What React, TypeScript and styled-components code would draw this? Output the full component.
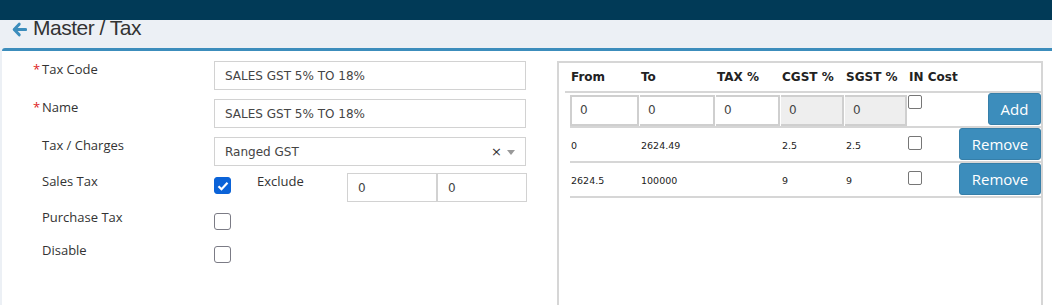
import React from 'react'
import styled, { createGlobalStyle } from 'styled-components'

const GlobalStyle = createGlobalStyle`
  body {
    margin: 0;
    background: #ecf0f5;
    font-family: "Open Sans", "Noto Sans", sans-serif;
    color: #333;
    overflow: hidden;
  }
`

const rows = [
  { from: '0', to: '2624.49', tax: '', cgst: '2.5', sgst: '2.5' },
  { from: '2624.5', to: '100000', tax: '', cgst: '9', sgst: '9' },
]

const App = () => {
  return (
    <>
      <GlobalStyle />
      <TopBar />
      <Heading>
        <BackIcon>
          <svg width="15" height="15" viewBox="0 0 15 15">
            <path d="M7.2 2.2 L2.2 7.5 L7.2 12.8" fill="none" stroke="currentColor" strokeWidth="3" strokeLinecap="round" strokeLinejoin="round" />
            <path d="M3 7.5 H13.5" fill="none" stroke="currentColor" strokeWidth="3.2" strokeLinecap="round" />
          </svg>
        </BackIcon>
        <Title>Master / Tax</Title>
      </Heading>
      <Box>
        <FormCol>
          <FormRow $gap={9}>
            <Label>
              <Star>*</Star>Tax Code
            </Label>
            <TextInput defaultValue="SALES GST 5% TO 18%" />
          </FormRow>
          <FormRow $gap={9}>
            <Label>
              <Star>*</Star>Name
            </Label>
            <TextInput defaultValue="SALES GST 5% TO 18%" />
          </FormRow>
          <FormRow $gap={7}>
            <Label>
              <Star />Tax / Charges
            </Label>
            <Select>
              <span>Ranged GST</span>
              <SelectTools>
                <Clear>×</Clear>
                <Caret />
              </SelectTools>
            </Select>
          </FormRow>
          <FormRow $gap={7}>
            <Label>
              <Star />Sales Tax
            </Label>
            <Check $checked>
              <svg width="12" height="10" viewBox="0 0 12 10">
                <path d="M1.5 5.2 L4.5 8.2 L10.5 1.8" fill="none" stroke="#fff" strokeWidth="2.2" />
              </svg>
            </Check>
            <ExcludeLabel>Exclude</ExcludeLabel>
            <SmallInput defaultValue="0" />
            <SmallInput defaultValue="0" />
          </FormRow>
          <FormRow $gap={12}>
            <Label>
              <Star />Purchase Tax
            </Label>
            <Check />
          </FormRow>
          <FormRow $gap={0}>
            <Label>
              <Star />Disable
            </Label>
            <Check />
          </FormRow>
        </FormCol>

        <Panel>
          <HeadRow>
            <HeadCell $first>From</HeadCell>
            <HeadCell>To</HeadCell>
            <HeadCell>TAX %</HeadCell>
            <HeadCell>CGST %</HeadCell>
            <HeadCell>SGST %</HeadCell>
            <HeadCell>IN Cost</HeadCell>
          </HeadRow>
          <BodyRow>
            <Cell><CellInput $first defaultValue="0" /></Cell>
            <Cell><CellInput defaultValue="0" /></Cell>
            <Cell><CellInput defaultValue="0" /></Cell>
            <Cell><CellInput $disabled readOnly defaultValue="0" /></Cell>
            <Cell><CellInput $disabled readOnly defaultValue="0" /></Cell>
            <LastCell>
              <SmallCheck $top={2} />
              <Button $w={53}>Add</Button>
            </LastCell>
          </BodyRow>
          {rows.map((r, i) => (
            <BodyRow key={i}>
              <Cell $text>{r.from}</Cell>
              <Cell $text>{r.to}</Cell>
              <Cell $text>{r.tax}</Cell>
              <Cell $text>{r.cgst}</Cell>
              <Cell $text>{r.sgst}</Cell>
              <LastCell>
                <SmallCheck $top={8} />
                <Button $w={82}>Remove</Button>
              </LastCell>
            </BodyRow>
          ))}
        </Panel>
      </Box>
    </>
  )
}

export default App

const TopBar = styled.div`
  height: 20px;
  background: #013a57;
`
const Heading = styled.div`
  height: 28px;
  display: flex;
  align-items: flex-start;
  padding-left: 12px;
`
const BackIcon = styled.span`
  display: flex;
  color: #3c8dbc;
  margin-top: 2px;
  width: 21px;
`
const Title = styled.h1`
  margin: -4px 0 0 0;
  font-family: "Liberation Sans", Arial, sans-serif;
  font-weight: normal;
  font-size: 21px;
  line-height: 24px;
  letter-spacing: -0.5px;
  color: #333;
`
const Box = styled.div`
  margin-left: 2px;
  height: 254px;
  background: #fff;
  border-top: 3px solid #3c8dbc;
  border-top-left-radius: 3px;
  display: flex;
  align-items: flex-start;
  padding-top: 10px;
  overflow: hidden;
`
const FormCol = styled.div`
  width: 555px;
  display: flex;
  flex-direction: column;
`
const FormRow = styled.div<{ $gap: number }>`
  display: flex;
  align-items: flex-start;
  margin-bottom: ${p => p.$gap}px;
`
const Label = styled.div`
  width: 171px;
  padding-left: 31px;
  display: flex;
  font-size: 13px;
  line-height: 17px;
  color: #333;
`
const Star = styled.span`
  width: 9px;
  color: #dd2222;
  font-size: 13px;
`
const TextInput = styled.input`
  box-sizing: border-box;
  margin-left: 10px;
  width: 312px;
  height: 29px;
  border: 1px solid #d2d2d2;
  padding: 0 10px;
  font-family: "DejaVu Sans", Verdana, sans-serif;
  font-size: 12px;
  color: #444;
  outline: none;
`
const Select = styled.div`
  box-sizing: border-box;
  margin-left: 10px;
  width: 312px;
  height: 29px;
  border: 1px solid #d2d2d2;
  padding: 0 10px;
  display: flex;
  align-items: center;
  justify-content: space-between;
  font-family: "DejaVu Sans", Verdana, sans-serif;
  font-size: 12px;
  color: #444;
`
const SelectTools = styled.span`
  display: flex;
  align-items: center;
  gap: 5px;
`
const Clear = styled.span`
  font-family: "DejaVu Sans", sans-serif;
  font-size: 13px;
  color: #333;
`
const Caret = styled.span`
  width: 0;
  height: 0;
  border-left: 4px solid transparent;
  border-right: 4px solid transparent;
  border-top: 5px solid #999;
  margin-top: 2px;
`
const Check = styled.span<{ $checked?: boolean }>`
  box-sizing: border-box;
  width: 17px;
  height: 17px;
  margin: 4px 0 0 10px;
  border-radius: 3px;
  border: 1px solid ${p => (p.$checked ? '#0b63d8' : '#7b7b85')};
  background: ${p => (p.$checked ? '#0b63d8' : '#fff')};
  display: flex;
  align-items: center;
  justify-content: center;
`
const ExcludeLabel = styled.span`
  margin-left: 26px;
  width: 90px;
  font-size: 13px;
  line-height: 17px;
`
const SmallInput = styled.input`
  box-sizing: border-box;
  width: 90px;
  height: 29px;
  border: 1px solid #d2d2d2;
  padding: 0 10px;
  font-family: "DejaVu Sans", Verdana, sans-serif;
  font-size: 12px;
  color: #444;
  outline: none;
`
const Panel = styled.div`
  box-sizing: border-box;
  width: 486px;
  height: 300px;
  border: 2px solid #d6d6d6;
  padding-left: 6px;
`
const HeadRow = styled.div`
  display: grid;
  grid-template-columns: 75px 76px 65px 64px 63px 1fr;
  height: 28px;
  border-bottom: 2px solid #d6d6d6;
  align-items: center;
`
const HeadCell = styled.div<{ $first?: boolean }>`
  padding-left: ${p => (p.$first ? 6 : 1)}px;
  font-family: "DejaVu Sans", Verdana, sans-serif;
  font-weight: bold;
  font-size: 12px;
  color: #222;
`
const BodyRow = styled.div`
  margin-left: 5px;
  display: grid;
  grid-template-columns: 70px 76px 65px 64px 63px 1fr;
  height: 33px;
  border-bottom: 2px solid #d6d6d6;
  align-items: stretch;
`
const Cell = styled.div<{ $text?: boolean }>`
  display: flex;
  align-items: center;
  padding-left: 1px;
  padding-top: 1px;
  font-family: "DejaVu Sans", Verdana, sans-serif;
  font-size: 9.5px;
  color: #222;
`
const CellInput = styled.input<{ $first?: boolean; $disabled?: boolean }>`
  box-sizing: border-box;
  width: 100%;
  height: 31px;
  margin-left: -1px;
  border: 2px solid #cfcfcf;
  border-left-width: ${p => (p.$first ? 2 : 0)}px;
  background: ${p => (p.$disabled ? '#eeeeee' : '#fff')};
  padding: 0 8px;
  font-family: "DejaVu Sans", Verdana, sans-serif;
  font-size: 12px;
  color: #444;
  outline: none;
`
const LastCell = styled.div`
  display: flex;
  justify-content: space-between;
  align-items: flex-start;
`
const SmallCheck = styled.span<{ $top: number }>`
  box-sizing: border-box;
  width: 14px;
  height: 14px;
  margin-top: ${p => p.$top}px;
  border: 1px solid #767676;
  border-radius: 2px;
  background: #fff;
`
const Button = styled.button<{ $w: number }>`
  box-sizing: border-box;
  width: ${p => p.$w}px;
  height: 32px;
  background: #3c8dbc;
  border: 1px solid #367fa9;
  border-radius: 3px;
  color: #fff;
  font-family: "Open Sans", sans-serif;
  font-size: 15px;
  padding: 0;
`
